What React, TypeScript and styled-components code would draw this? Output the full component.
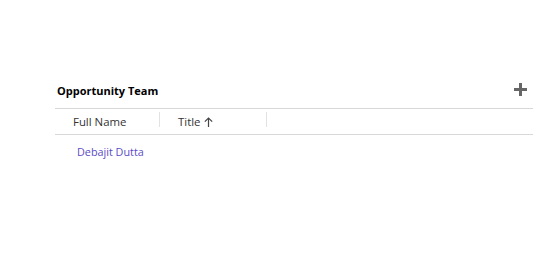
import styled, { createGlobalStyle } from "styled-components";

const GlobalStyle = createGlobalStyle`
  body {
    margin: 0;
    background: #ffffff;
    font-family: "Segoe UI", "Open Sans", "Liberation Sans", sans-serif;
  }
`;

const columns = [
  { label: "Full Name", width: 105, sorted: false },
  { label: "Title", width: 107, sorted: true },
];

const rows = [{ name: "Debajit Dutta" }];

const App = () => {
  return (
    <>
      <GlobalStyle />
      <Page>
        <Section>
          <SectionHeader>
            <SectionTitle>Opportunity Team</SectionTitle>
            <AddButton aria-label="Add">
              <svg width="13" height="13" viewBox="0 0 13 13">
                <rect x="5" y="0" width="3" height="13" fill="#666" />
                <rect x="0" y="5" width="13" height="3" fill="#666" />
              </svg>
            </AddButton>
          </SectionHeader>
          <HeaderRow>
            {columns.map((col) => (
              <HeaderCell key={col.label} $width={col.width}>
                {col.label}
                {col.sorted && (
                  <svg width="9" height="10" viewBox="0 0 9 10">
                    <path d="M4.5 1 V10 M0.8 4.7 L4.5 1 L8.2 4.7" stroke="#444" strokeWidth="1.2" fill="none" />
                  </svg>
                )}
              </HeaderCell>
            ))}
          </HeaderRow>
          {rows.map((r) => (
            <DataRow key={r.name}>
              <NameLink>{r.name}</NameLink>
            </DataRow>
          ))}
        </Section>
      </Page>
    </>
  );
};

const Page = styled.div`
  width: 533px;
  height: 262px;
  padding-top: 80px;
  padding-left: 55px;
  box-sizing: border-box;
`;

const Section = styled.div`
  display: flex;
  flex-direction: column;
`;

const SectionHeader = styled.div`
  height: 29px;
  display: flex;
  align-items: flex-start;
  justify-content: space-between;
  border-bottom: 1px solid #d8d8d8;
  box-sizing: border-box;
  padding: 3px 6px 0 2px;
`;

const SectionTitle = styled.span`
  font-size: 11px;
  line-height: 15px;
  font-weight: 700;
  color: #000;
`;

const AddButton = styled.span`
  display: flex;
`;

const HeaderRow = styled.div`
  height: 26px;
  display: flex;
  border-bottom: 1px solid #d8d8d8;
  box-sizing: border-box;
`;

const HeaderCell = styled.div<{ $width: number }>`
  position: relative;
  width: ${(p) => p.$width}px;
  display: flex;
  align-items: center;
  gap: 4px;
  padding-left: 18px;
  box-sizing: border-box;
  font-size: 11.4px;
  color: #333;
  &::after {
    content: "";
    position: absolute;
    right: 0;
    top: 3px;
    height: 15px;
    width: 1px;
    background: #e2e2e2;
  }
`;

const DataRow = styled.div`
  height: 32px;
  display: flex;
  align-items: center;
  padding-left: 22px;
`;

const NameLink = styled.span`
  font-size: 10.8px;
  color: #5b4bc6;
`;

export default App;
